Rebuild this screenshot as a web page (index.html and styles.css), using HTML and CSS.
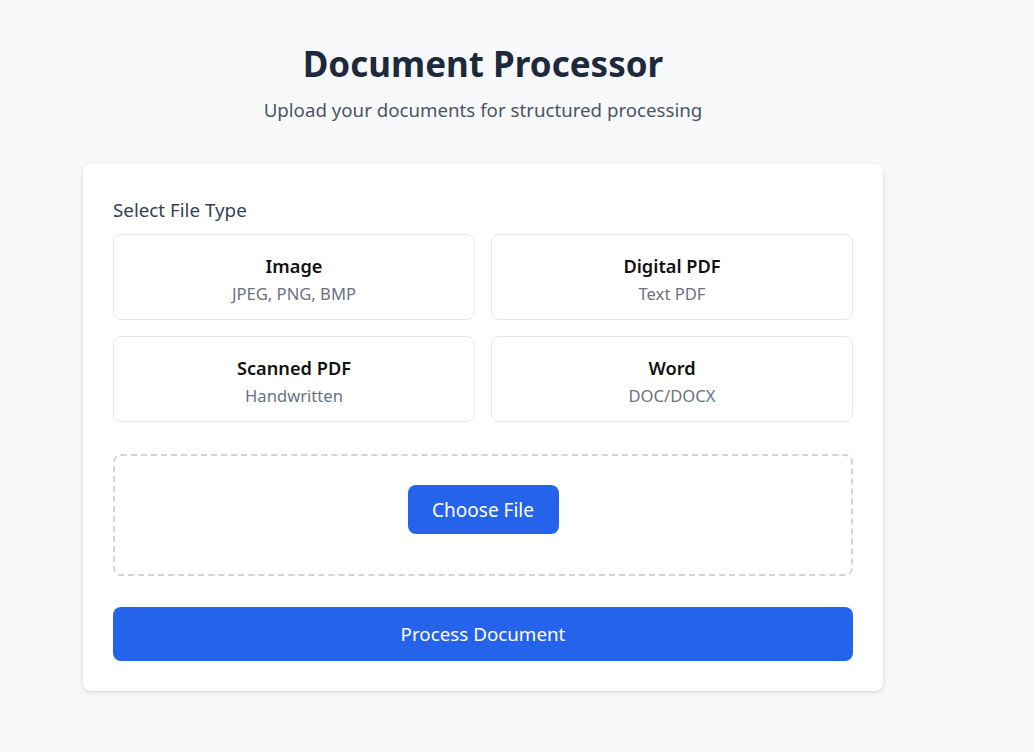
FILE: index.html
```html
<!DOCTYPE html>
<html lang="en">
<head>
<meta charset="utf-8">
<title>Document Processor</title>
<link rel="stylesheet" href="styles.css">
</head>
<body>
<main class="page">
  <header class="head">
    <h1 class="title">Document Processor</h1>
    <p class="subtitle">Upload your documents for structured processing</p>
  </header>
  <section class="card">
    <div class="label">Select File Type</div>
    <div class="types">
      <button class="type"><span class="type-name">Image</span><span class="type-desc">JPEG, PNG, BMP</span></button>
      <button class="type"><span class="type-name">Digital PDF</span><span class="type-desc">Text PDF</span></button>
      <button class="type"><span class="type-name">Scanned PDF</span><span class="type-desc">Handwritten</span></button>
      <button class="type"><span class="type-name">Word</span><span class="type-desc">DOC/DOCX</span></button>
    </div>
    <div class="drop">
      <button class="choose">Choose File</button>
    </div>
    <button class="process">Process Document</button>
  </section>
</main>
</body>
</html>
```
FILE: styles.css
```css
* { box-sizing: border-box; }
html, body { margin: 0; padding: 0; }
body {
  background: #f8f9fb;
  font-family: "Noto Sans", "Open Sans", sans-serif;
  color: #1f2937;
  min-height: 752px;
}
.page {
  width: 800px;
  margin-left: 83px;
  padding-top: 38px;
}
.head { text-align: center; }
.title {
  margin: 0;
  font-size: 35px;
  line-height: 52px;
  font-weight: 700;
  color: #1e293b;
}
.subtitle {
  margin: 6px 0 0;
  font-size: 18.7px;
  line-height: 28px;
  color: #4b5563;
}
.card {
  margin-top: 40px;
  background: #fff;
  border-radius: 8px;
  box-shadow: 0 2px 6px rgba(0,0,0,0.1), 0 1px 2px rgba(0,0,0,0.06);
  padding: 30px;
}
.label {
  font-size: 18.8px;
  line-height: 28px;
  color: #374151;
  margin-bottom: 12px;
  margin-top: 2px;
  margin-bottom: 10px;
}
.types {
  display: grid;
  grid-template-columns: 1fr 1fr;
  gap: 16px;
}
.type {
  display: flex;
  flex-direction: column;
  align-items: center;
  justify-content: flex-start;
  height: 86px;
  background: #fff;
  border: 1px solid #e5e7eb;
  border-radius: 8px;
  font-family: inherit;
  padding: 17px 0 0;
}
.type-name {
  font-size: 18.2px;
  line-height: 28px;
  font-weight: 600;
  color: #111;
}
.type-desc {
  font-size: 16.6px;
  line-height: 28px;
  color: #6b7280;
}
.drop {
  margin-top: 32px;
  border: 2px dashed #d1d5db;
  border-radius: 8px;
  height: 122px;
  display: flex;
  justify-content: center;
  align-items: flex-start;
  padding-top: 29px;
}
.choose {
  background: #2563eb;
  color: #fff;
  border: 0;
  border-radius: 8px;
  font-family: inherit;
  font-size: 19px;
  width: 151px;
  height: 49px;
  padding: 0;
}
.process {
  display: block;
  width: 100%;
  margin-top: 31px;
  height: 54px;
  background: #2563eb;
  color: #fff;
  border: 0;
  border-radius: 8px;
  font-family: inherit;
  font-size: 18.8px;
}
```
